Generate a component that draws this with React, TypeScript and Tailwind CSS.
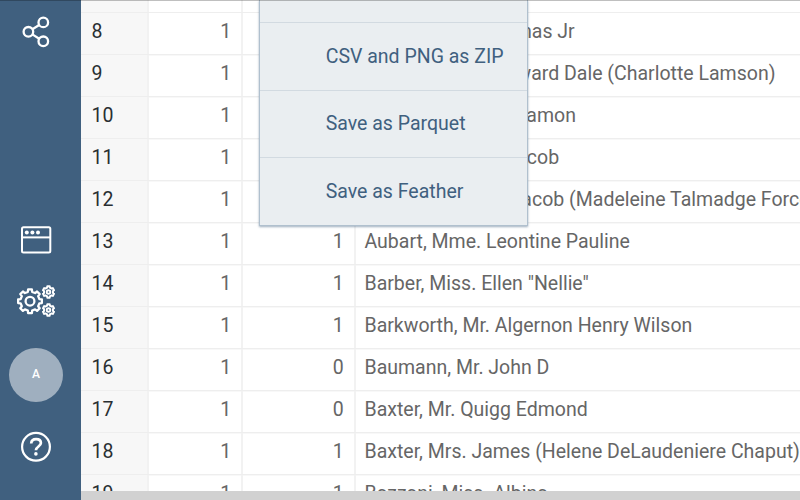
import React from "react";

type Passenger = { n: number; survived: string; name: string };

const rows: Passenger[] = [
  { n: 8, survived: "0", name: "Andrews, Mr. Thomas Jr" },
  { n: 9, survived: "1", name: "Appleton, Mrs. Edward Dale (Charlotte Lamson)" },
  { n: 10, survived: "0", name: "Artagaveytia, Mr. Ramon" },
  { n: 11, survived: "0", name: "Astor, Col. John Jacob" },
  { n: 12, survived: "1", name: "Astor, Mrs. John Jacob (Madeleine Talmadge Force)" },
  { n: 13, survived: "1", name: "Aubart, Mme. Leontine Pauline" },
  { n: 14, survived: "1", name: "Barber, Miss. Ellen \"Nellie\"" },
  { n: 15, survived: "1", name: "Barkworth, Mr. Algernon Henry Wilson" },
  { n: 16, survived: "0", name: "Baumann, Mr. John D" },
  { n: 17, survived: "0", name: "Baxter, Mr. Quigg Edmond" },
  { n: 18, survived: "1", name: "Baxter, Mrs. James (Helene DeLaudeniere Chaput)" },
  { n: 19, survived: "1", name: "Bazzani, Miss. Albina" },
];

const menuItems = ["CSV and PNG as ZIP", "Save as Parquet", "Save as Feather"];

function gearPath(cx: number, cy: number, outer: number, inner: number, teeth: number): string {
  const step = (Math.PI * 2) / teeth;
  const offsets: [number, number][] = [
    [-0.29, inner],
    [-0.2, outer],
    [0.2, outer],
    [0.29, inner],
  ];
  const points: string[] = [];
  for (let i = 0; i < teeth; i++) {
    for (const [o, r] of offsets) {
      const a = -Math.PI / 2 + (i + o) * step;
      points.push(`${(cx + r * Math.cos(a)).toFixed(2)} ${(cy + r * Math.sin(a)).toFixed(2)}`);
    }
  }
  return `M${points.join("L")}Z`;
}

function ShareIcon() {
  return (
    <svg width="28" height="32" viewBox="0 0 28 32" fill="none" stroke="white" strokeWidth="2.3">
      <circle cx="6.4" cy="15.8" r="4.8" />
      <circle cx="21.3" cy="6.4" r="4.8" />
      <circle cx="21.3" cy="25.3" r="4.8" />
      <path d="M10.4 13.2L17.2 9M10.4 18.4L17.2 22.7" />
    </svg>
  );
}

function WindowIcon() {
  return (
    <svg width="32" height="28" viewBox="0 0 32 28" fill="none" stroke="white" strokeWidth="2">
      <rect x="2" y="1.2" width="28.3" height="25.2" rx="1.5" />
      <path d="M2 11.4H30.3" />
      <g fill="white" stroke="none">
        <circle cx="6.8" cy="6.4" r="2" />
        <circle cx="12.4" cy="6.4" r="2" />
        <circle cx="18" cy="6.4" r="2" />
      </g>
    </svg>
  );
}

function GearsIcon() {
  return (
    <svg width="40" height="32" viewBox="0 0 40 32" fill="none" stroke="white" strokeLinejoin="round">
      <path d={gearPath(14, 16.2, 12, 9.6, 8)} strokeWidth="2.3" />
      <circle cx="14" cy="16.2" r="4.4" strokeWidth="2.3" />
      <path d={gearPath(32.5, 7, 5.8, 4.6, 6)} strokeWidth="2" />
      <circle cx="32.5" cy="7" r="1.8" strokeWidth="1.9" />
      <path d={gearPath(32.5, 25, 5.8, 4.6, 6)} strokeWidth="2" />
      <circle cx="32.5" cy="25" r="1.8" strokeWidth="1.9" />
    </svg>
  );
}

function HelpIcon() {
  return (
    <svg width="32" height="32" viewBox="0 0 32 32" fill="none" stroke="white">
      <circle cx="16" cy="15.8" r="13.9" strokeWidth="2.2" />
      <path d="M11.2 12.5C11.4 9.7 13.4 8.2 16.1 8.2C18.9 8.2 20.9 9.7 20.9 12.1C20.9 15.4 15.9 15.7 15.9 19.3" strokeWidth="2.7" />
      <circle cx="15.9" cy="22.9" r="1.8" fill="white" stroke="none" />
    </svg>
  );
}

export default function App() {
  return (
    <div className="relative flex h-[500px] w-[800px] overflow-hidden bg-white font-['Roboto',sans-serif]">
      <nav className="flex w-[81px] shrink-0 flex-col items-center bg-[#40607f] pr-[9px] pt-4">
        <ShareIcon />
        <div className="mt-[178px]"><WindowIcon /></div>
        <div className="mt-[31px]"><GearsIcon /></div>
        <div className="mt-[31px] flex size-[54px] items-center justify-center rounded-full bg-[#9fafbf] pb-0.5 text-xs font-medium text-white">
          A
        </div>
        <div className="mt-[29px]"><HelpIcon /></div>
      </nav>

      <main className="flex min-w-0 flex-1 flex-col">
        <div className="min-h-0 flex-1 overflow-hidden text-[19.5px]">
          <div className="flex h-[13px] border-b border-[#eeeeee]">
            <div className="w-[68px] shrink-0 border-r-2 border-[#f2f2f2] bg-[#f7f7f7]" />
            <div className="w-[94px] shrink-0 border-r-2 border-[#f2f2f2]" />
            <div className="w-[113px] shrink-0 border-r-2 border-[#f2f2f2]" />
          </div>
          {rows.map((row) => (
            <div key={row.n} className="flex h-[42px] border-b border-[#eeeeee] leading-[38px] text-[#666666] shadow-[0_1px_0_#f8f8f8]">
              <div className="w-[68px] shrink-0 border-r-2 border-[#f2f2f2] bg-[#f7f7f7] pl-[10.5px] text-[#292f32]">{row.n}</div>
              <div className="w-[94px] shrink-0 border-r-2 border-[#f2f2f2] pr-[9.9px] text-right">1</div>
              <div className="w-[113px] shrink-0 border-r-2 border-[#f2f2f2] pr-[10.2px] text-right">{row.survived}</div>
              <div className="min-w-0 flex-1 overflow-hidden whitespace-nowrap pl-[8.5px]">{row.name}</div>
            </div>
          ))}
        </div>
        <div className="h-[9px] shrink-0 bg-[#d1d1d1]" />
      </main>

      <div className="absolute left-[259px] top-0 w-[269px] border-x border-b border-[#b0c0ce] bg-[#eaeef1] text-[19.5px] text-[#40607f] shadow-[0_1px_2px_rgba(64,96,127,0.5)]">
        <div className="h-[22px]" />
        {menuItems.map((item) => (
          <div key={item} className="flex h-[67.7px] items-center border-t border-[#d2dae1] pl-[65.7px]">
            {item}
          </div>
        ))}
      </div>
      <div className="absolute inset-x-0 top-0 h-px bg-black/25" />
    </div>
  );
}
